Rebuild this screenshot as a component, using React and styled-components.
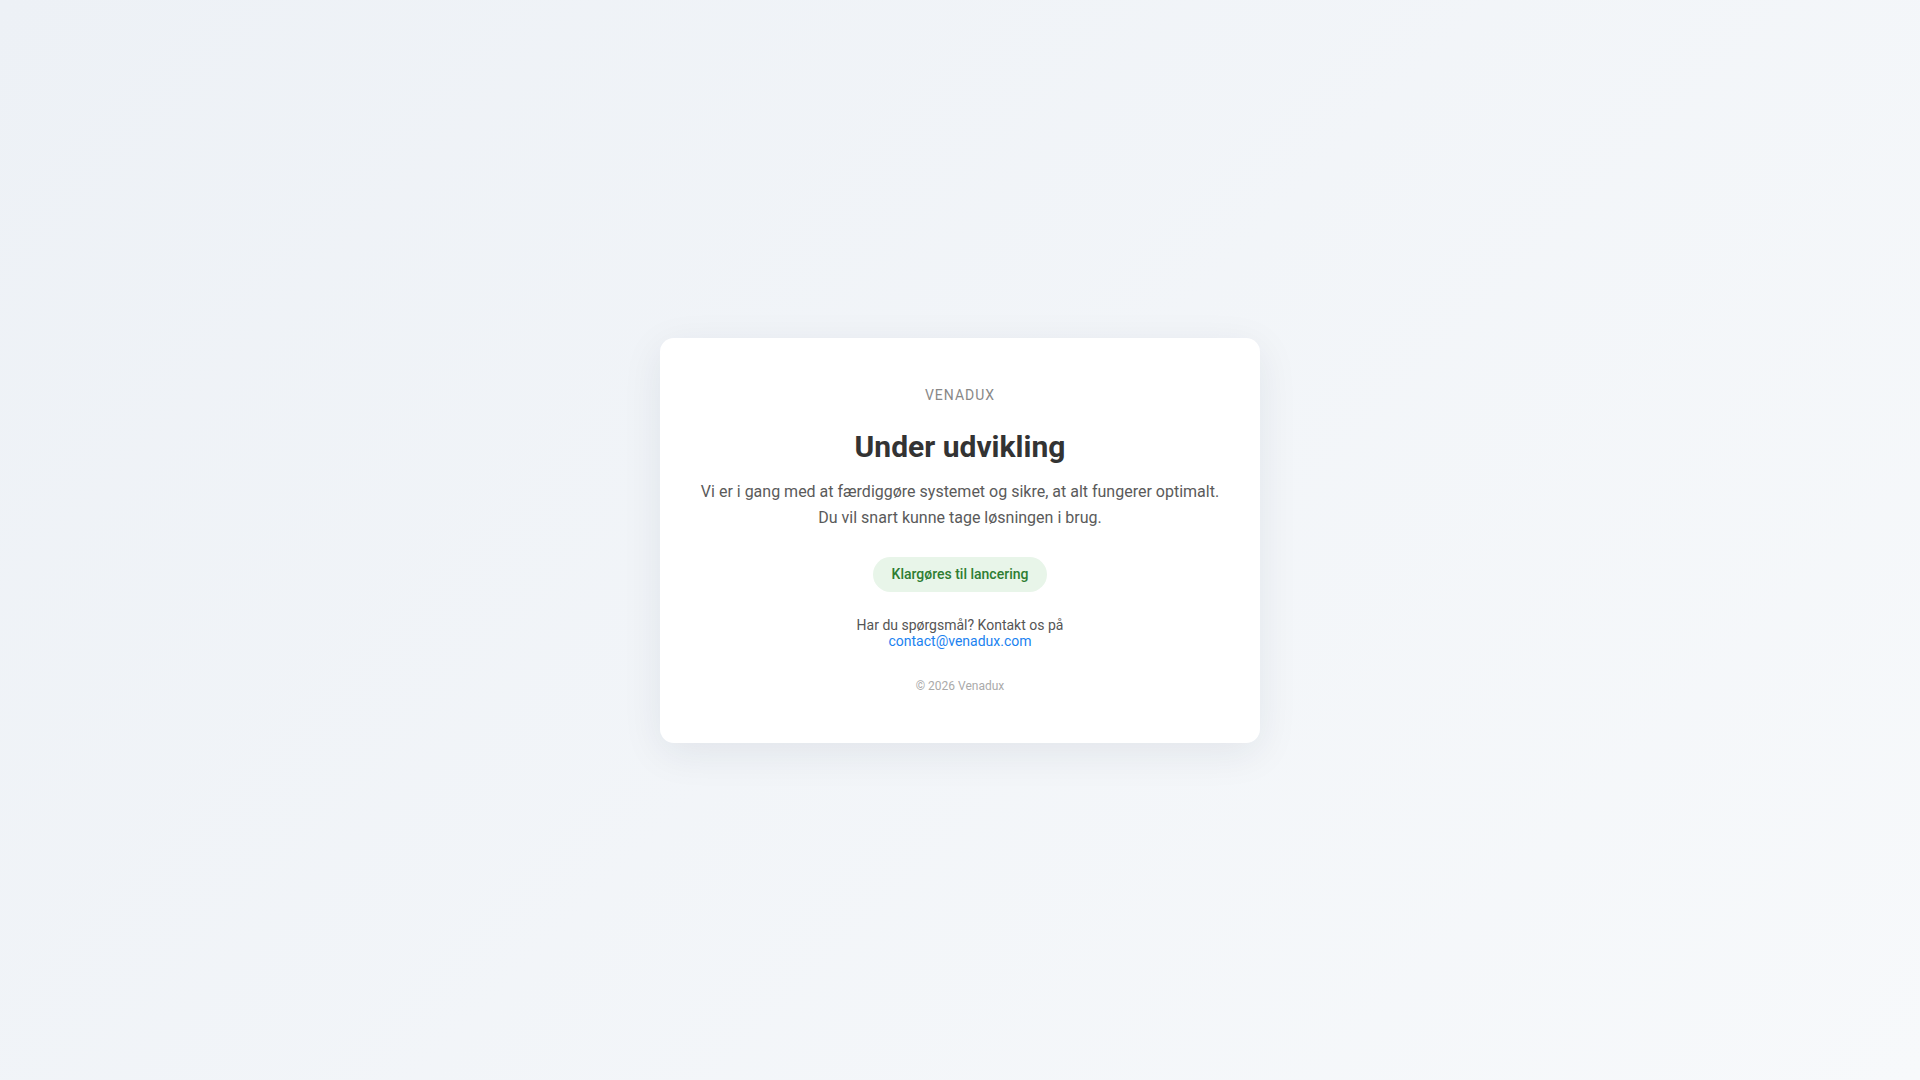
import React from "react";
import styled, { createGlobalStyle } from "styled-components";

const GlobalStyle = createGlobalStyle`
  html, body, #root { margin: 0; padding: 0; height: 100%; }
  body {
    font-family: Roboto, "Liberation Sans", Arial, sans-serif;
    background: linear-gradient(135deg, #edf1f6 0%, #f7f9fb 100%);
  }
`;

const Page = styled.main`
  min-height: 100vh;
  display: flex;
  align-items: center;
  justify-content: center;
`;

const Card = styled.section`
  width: 600px;
  box-sizing: border-box;
  background: #ffffff;
  border-radius: 14px;
  box-shadow: 0 10px 40px rgba(30, 40, 60, 0.08);
  padding: 49px 40px 50px;
  display: flex;
  flex-direction: column;
  align-items: center;
  text-align: center;
`;

const Brand = styled.div`
  font-size: 14px;
  line-height: 16px;
  letter-spacing: 1px;
  color: #888888;
  text-transform: uppercase;
`;

const Title = styled.h1`
  margin: 26px 0 15px;
  font-size: 30px;
  line-height: 35px;
  font-weight: 700;
  color: #333333;
`;

const Text = styled.p`
  margin: 0;
  font-size: 16px;
  line-height: 26px;
  color: #5a5a5a;
`;

const Badge = styled.span`
  margin-top: 26px;
  display: inline-block;
  padding: 9px 19px;
  font-size: 14px;
  line-height: 17px;
  font-weight: 500;
  color: #2e7d32;
  background: #e8f5e9;
  border-radius: 999px;
`;

const Contact = styled.div`
  margin-top: 25px;
  font-size: 14px;
  line-height: 16px;
  color: #555555;
`;

const Link = styled.a`
  color: #1a82f0;
  text-decoration: none;
`;

const Footer = styled.div`
  margin-top: 30px;
  font-size: 12px;
  line-height: 14px;
  color: #aaaaaa;
`;

export default function App() {
  return (
    <>
      <GlobalStyle />
      <Page>
        <Card>
          <Brand>Venadux</Brand>
          <Title>Under udvikling</Title>
          <Text>
            Vi er i gang med at færdiggøre systemet og sikre, at alt fungerer optimalt.
            <br />
            Du vil snart kunne tage løsningen i brug.
          </Text>
          <Badge>Klargøres til lancering</Badge>
          <Contact>
            Har du spørgsmål? Kontakt os på
            <br />
            <Link href="mailto:contact@venadux.com">contact@venadux.com</Link>
          </Contact>
          <Footer>© 2026 Venadux</Footer>
        </Card>
      </Page>
    </>
  );
}
